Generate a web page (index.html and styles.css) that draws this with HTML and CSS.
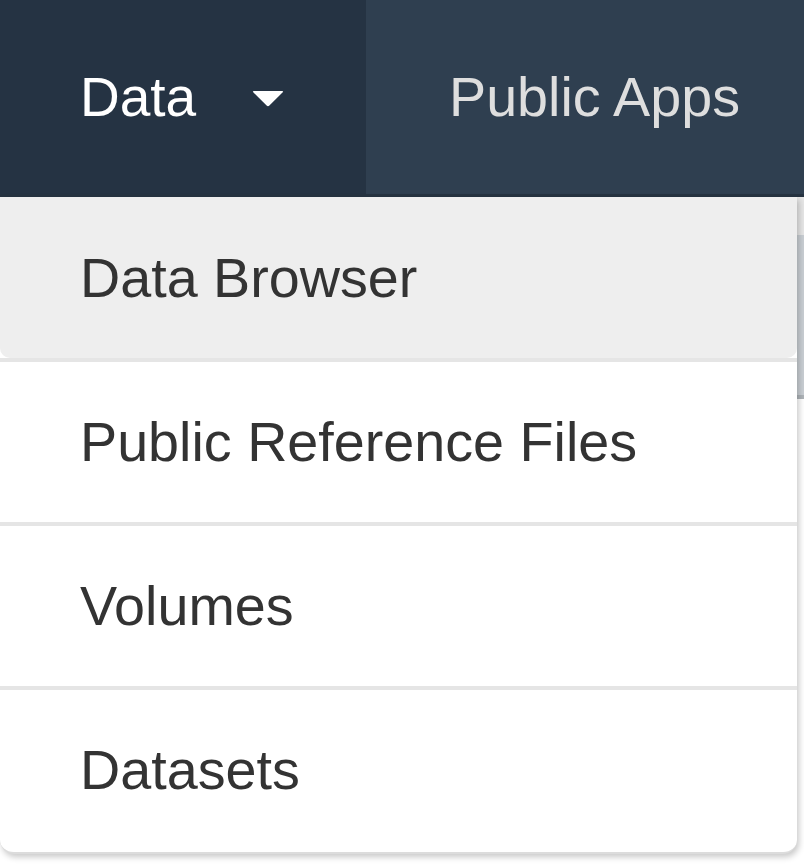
FILE: index.html
```html
<!DOCTYPE html>
<html>
<head>
<meta charset="utf-8">
<link rel="stylesheet" href="styles.css">
</head>
<body>
<header class="navbar">
  <div class="nav-item nav-data">
    <span class="nav-label">Data</span>
    <svg class="caret" width="32" height="17" viewBox="0 0 32 17"><path d="M2 1 H30 Q32 1 30.5 2.6 L17.4 15.6 Q16 17 14.6 15.6 L1.5 2.6 Q0 1 2 1 Z" fill="#ffffff"/></svg>
  </div>
  <div class="nav-item nav-apps">
    <span class="nav-label">Public Apps</span>
  </div>
</header>
<main class="page">
  <div class="page-edge">
    <div class="edge-top"></div>
    <div class="edge-band"></div>
  </div>
</main>
<ul class="dropdown">
  <li class="dd-item active">Data Browser</li>
  <li class="dd-divider"></li>
  <li class="dd-item">Public Reference Files</li>
  <li class="dd-divider"></li>
  <li class="dd-item">Volumes</li>
  <li class="dd-divider"></li>
  <li class="dd-item">Datasets</li>
</ul>
</body>
</html>
```
FILE: styles.css
```css
html, body {
  margin: 0;
  padding: 0;
  background: #ffffff;
  font-family: "Liberation Sans", Arial, sans-serif;
  overflow: hidden;
  height: 864px;
}

.navbar {
  display: flex;
  height: 197px;
  box-sizing: border-box;
  border-bottom: 3px solid rgba(0, 0, 0, 0.18);
  background: #2f3f50;
}

.nav-item {
  display: flex;
  align-items: center;
  font-size: 55px;
}

.nav-data {
  width: 366px;
  box-sizing: border-box;
  padding-left: 80px;
  background: #253343;
  color: #ffffff;
}

.caret {
  margin-left: 56px;
  margin-top: 2px;
}

.nav-apps {
  flex: 1;
  padding-left: 83px;
  font-size: 55.7px;
  color: #dedede;
}

.page {
  display: flex;
  justify-content: flex-end;
  height: 667px;
}

.page-edge {
  display: flex;
  flex-direction: column;
  width: 7px;
}

.edge-top {
  height: 38px;
  background: #e6e6e6;
}

.edge-band {
  height: 160px;
  background: #c9ced3;
  border-bottom: 4px solid #aeb3b8;
}

.dropdown {
  position: absolute;
  top: 197px;
  left: 0;
  width: 797px;
  margin: 0;
  padding: 0 0 2px 0;
  list-style: none;
  background: #ffffff;
  border-radius: 0 0 14px 14px;
  border-bottom: 2px solid #dcdcdc;
  box-shadow: 2px 3px 6px rgba(0, 0, 0, 0.22);
}

.dd-item {
  display: flex;
  align-items: center;
  height: 160px;
  padding-left: 80px;
  font-size: 55.7px;
  color: #333333;
}

.dd-item.active {
  height: 161px;
  background: #eeeeee;
  border-radius: 0 0 10px 10px;
}

.dd-divider {
  height: 4px;
  background: #e5e5e5;
}
```
